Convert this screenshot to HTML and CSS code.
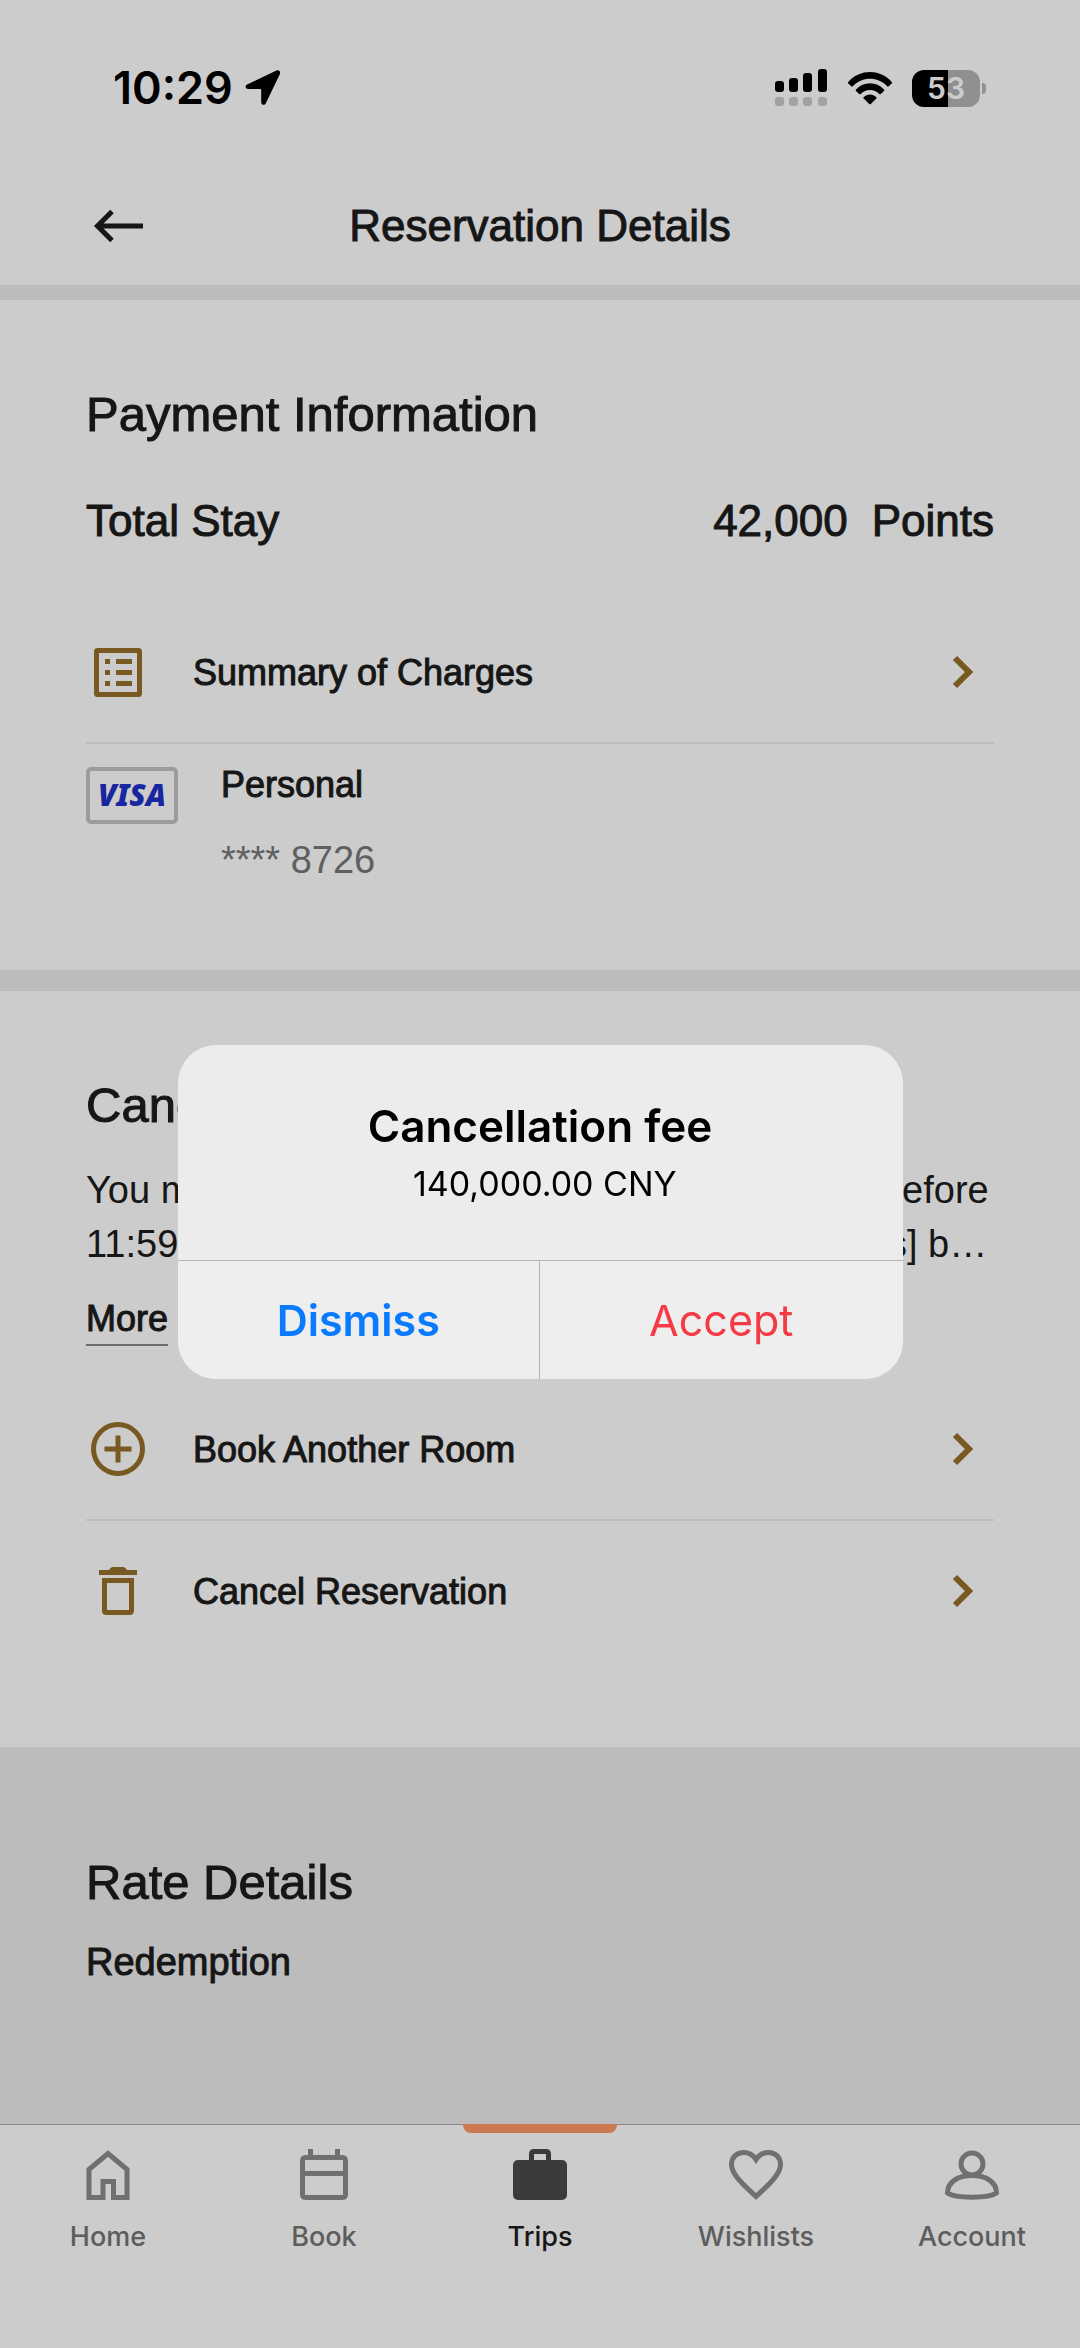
FILE: index.html
```html
<!DOCTYPE html>
<html lang="en">
<head>
  <meta charset="UTF-8" />
  <meta name="viewport" content="width=device-width, initial-scale=1.0"/>
  <title>Reservation Details</title>
  <link rel="stylesheet" href="styles.css">
</head>
<body>
  <div class="status-bar">
    <div class="status-left">
      <span class="time">10:29</span>
      <svg width="36" height="36" viewBox="0 0 36 36" fill="#000" aria-hidden="true">
        <path d="M31.500 .6 C33.800 -.4 36 1.700 34.800 4.200 L20.800 33.300 C19.600 35.800 16.200 35.200 16.200 32.300 V20.200 C16.200 19.500 15.800 19.100 15.100 19.100 H3.200 C.2 19.100 -.4 15.700 2.100 14.500 Z"/>
      </svg>
    </div>
    <div class="status-right">
      <svg width="54" height="38" viewBox="0 0 54 38" aria-hidden="true">
        <g fill="#000">
          <rect x="1" y="12" width="9" height="11" rx="3"/>
          <rect x="15" y="9" width="9" height="14" rx="3"/>
          <rect x="29" y="4" width="9" height="19" rx="3"/>
          <rect x="44" y="0" width="9" height="23" rx="3"/>
        </g>
        <g fill="#cbcbcb">
          <rect x="1" y="28" width="9" height="9" rx="3"/>
          <rect x="15" y="28" width="9" height="9" rx="3"/>
          <rect x="29" y="28" width="9" height="9" rx="3"/>
          <rect x="44" y="28" width="9" height="9" rx="3"/>
        </g>
      </svg>
      <svg width="46" height="34" viewBox="0 0 46 34" fill="#000" aria-hidden="true">
        <path d="M1.300 10.900 C13 -2.200 33 -2.200 44.700 10.900 C45.200 11.500 45.200 12 44.700 12.500 L41.700 15.300 C41.200 15.800 40.700 15.800 40.200 15.300 C31 5.300 15 5.300 5.800 15.300 C5.300 15.800 4.800 15.800 4.300 15.300 L1.300 12.500 C.8 12 .8 11.500 1.300 10.900 Z"/>
        <path d="M9 18.500 C16.500 10.200 29.500 10.200 37 18.500 C37.500 19.100 37.500 19.600 37 20.100 L33.800 23 C33.300 23.500 32.800 23.400 32.300 22.900 C27.300 17.700 18.700 17.700 13.700 22.900 C13.200 23.400 12.700 23.500 12.200 23 L9 20.100 C8.500 19.600 8.500 19.100 9 18.500 Z"/>
        <path d="M16.800 26 C20.200 22.600 25.800 22.600 29.200 26 C29.800 26.600 29.800 27.100 29.300 27.600 L23.800 32.900 C23.200 33.400 22.800 33.400 22.200 32.900 L16.700 27.600 C16.200 27.100 16.200 26.600 16.800 26 Z"/>
      </svg>
      <span class="battery">53</span>
    </div>
  </div>

  <header class="top-bar">
    <button type="button" class="back-btn" aria-label="Back">
      <svg width="64" height="36" viewBox="0 0 64 36" fill="none" stroke="#1c1c1c" stroke-width="5" aria-hidden="true">
        <path d="M57 18 H12 M26 3.500 L11.500 18 L26 32.500"/>
      </svg>
    </button>
    <h1>Reservation Details</h1>
  </header>

  <main>
    <section class="section payment">
      <h2>Payment Information</h2>
      <div class="total">
        <span>Total Stay</span>
        <span class="points"><span>42,000</span><span>Points</span></span>
      </div>
      <a href="#charges" class="row">
        <svg class="row-icon" viewBox="0 0 64 64" aria-hidden="true">
          <rect x="10.500" y="10.500" width="43" height="44" rx="1" fill="none" stroke="currentColor" stroke-width="5"/>
          <path fill="currentColor" d="M19 19h5v5h-5zM30 19h16v5h-16zM19 30h5v5h-5zM30 30h16v5h-16zM19 41h5v5h-5zM30 41h16v5h-16z"/>
        </svg>
        <span class="row-label">Summary of Charges</span>
        <svg class="chevron" viewBox="0 0 32 40" aria-hidden="true"><path d="M9 6 L23 20 L9 34"/></svg>
      </a>
      <div class="card">
        <span class="visa">VISA</span>
        <div class="card-info">
          <span class="card-name">Personal</span>
          <span class="card-number">**** 8726</span>
        </div>
      </div>
    </section>

    <section class="section cancellation">
      <h2>Cancellation Policy</h2>
      <p class="policy">You may cancel your reservation for no charge before 11:59 PM local hotel time on Jan 9 2024 (2 day[s] b…</p>
      <a href="#more" class="more">More</a>
      <a href="#book" class="row">
        <svg class="row-icon" viewBox="0 0 64 64" fill="none" stroke="currentColor" stroke-width="5" aria-hidden="true">
          <circle cx="32" cy="32" r="24.500"/>
          <path d="M32 18.500 V45.500 M18.500 32 H45.500"/>
        </svg>
        <span class="row-label">Book Another Room</span>
        <svg class="chevron" viewBox="0 0 32 40" aria-hidden="true"><path d="M9 6 L23 20 L9 34"/></svg>
      </a>
      <a href="#cancel" class="row">
        <svg class="row-icon" viewBox="0 0 64 64" aria-hidden="true">
          <path fill="currentColor" d="M13 11 H23 C24.500 8.500 26 8 28 8 H36 C38 8 39.500 8.500 41 11 H51 V16 H13 Z"/>
          <path fill="none" stroke="currentColor" stroke-width="5" d="M18.500 21.500 H45.500 V51.500 Q45.500 53.500 43.500 53.500 H20.500 Q18.500 53.500 18.500 51.500 Z"/>
        </svg>
        <span class="row-label">Cancel Reservation</span>
        <svg class="chevron" viewBox="0 0 32 40" aria-hidden="true"><path d="M9 6 L23 20 L9 34"/></svg>
      </a>
    </section>

    <section class="section rate">
      <h2>Rate Details</h2>
      <p class="rate-type">Redemption</p>
    </section>
  </main>

  <nav class="tab-bar">
    <a href="#home" class="tab">
      <svg viewBox="0 0 56 56" fill="none" stroke="currentColor" stroke-width="5" aria-hidden="true">
        <path d="M9 50.500 V22.500 L28 6.500 L47 22.500 V50.500 H33.500 V34.500 H23 V50.500 Z"/>
      </svg>
      <span>Home</span>
    </a>
    <a href="#book-tab" class="tab">
      <svg viewBox="0 0 56 56" fill="none" stroke="currentColor" stroke-width="5" aria-hidden="true">
        <rect x="6.500" y="10.500" width="43" height="40" rx="3"/>
        <path d="M6 26.500 H50 M14.500 2 V10 M41.500 2 V10"/>
      </svg>
      <span>Book</span>
    </a>
    <a href="#trips" class="tab active">
      <svg viewBox="0 0 56 56" aria-hidden="true">
        <rect x="1" y="13" width="54" height="40" rx="5" fill="currentColor"/>
        <path d="M19.500 14 V7 Q19.500 4.500 22 4.500 H34 Q36.500 4.500 36.500 7 V14" fill="none" stroke="currentColor" stroke-width="5"/>
      </svg>
      <span>Trips</span>
    </a>
    <a href="#wishlists" class="tab">
      <svg viewBox="0 0 56 56" fill="none" stroke="currentColor" stroke-width="5" aria-hidden="true">
        <path d="M28 49.500 C17 39 3.500 28 3.500 17.500 C3.500 10 9 5.500 15.500 5.500 C21 5.500 25.500 8.500 28 12.500 C30.500 8.500 35 5.500 40.500 5.500 C47 5.500 52.500 10 52.500 17.500 C52.500 28 39 39 28 49.500 Z"/>
      </svg>
      <span>Wishlists</span>
    </a>
    <a href="#account" class="tab">
      <svg viewBox="0 0 56 56" fill="none" stroke="currentColor" stroke-width="5" aria-hidden="true">
        <circle cx="28" cy="17" r="11"/>
        <path d="M3.500 46 C3.500 35 14 28.500 28 28.500 C42 28.500 52.500 35 52.500 46 C45 51.500 11 51.500 3.500 46 Z" stroke-linejoin="round"/>
      </svg>
      <span>Account</span>
    </a>
  </nav>

  <!-- cancellation fee alert -->
  <div class="overlay">
    <div class="alert" role="alertdialog" aria-labelledby="alert-title" aria-describedby="alert-text">
      <div class="alert-body">
        <h2 id="alert-title">Cancellation fee</h2>
        <p id="alert-text">&nbsp;140,000.00 CNY</p>
      </div>
      <div class="alert-actions">
        <button type="button" class="dismiss-btn">Dismiss</button>
        <button type="button" class="accept-btn">Accept</button>
      </div>
    </div>
  </div>
</body>
</html>
```

FILE: styles.css
```css
* {
  box-sizing: border-box;
}

body {
  margin: 0;
  min-height: 100vh;
  display: flex;
  flex-direction: column;
  background-color: #fff;
  color: #1c1c1c;
  font-family: "Liberation Sans", Helvetica, Arial, sans-serif;
  font-size: 36px;
}

h1, h2, p {
  margin: 0;
  font-weight: 400;
}

a {
  color: inherit;
  text-decoration: none;
}

button {
  padding: 0;
  border: none;
  background: none;
  font: inherit;
  cursor: pointer;
}

svg {
  display: block;
  flex-shrink: 0;
}

/* medium weight */
h1,
.section h2,
.total,
.row-label,
.card-name,
.more,
.rate-type {
  -webkit-text-stroke: 1px currentColor;
}

/* status bar */
.status-bar {
  height: 168px;
  padding: 8px 100px 0 113px;
  display: flex;
  align-items: center;
  justify-content: space-between;
  font-family: Inter, sans-serif;
  font-weight: 600;
}

.status-left {
  display: flex;
  align-items: center;
  gap: 12px;
}

.time {
  color: #000;
  font-size: 45px;
  line-height: 48px;
}

.status-right {
  display: flex;
  align-items: center;
  gap: 19px;
}

.battery {
  position: relative;
  width: 68px;
  height: 37px;
  border-radius: 12px;
  background: linear-gradient(to right, #000 36px, #b4b4b4 36px);
  color: #fff;
  font-size: 30px;
  line-height: 37px;
  text-align: center;
}

.battery::after {
  content: "";
  position: absolute;
  left: 70px;
  top: 13px;
  width: 4px;
  height: 11px;
  border-radius: 0 4px 4px 0;
  background-color: #b4b4b4;
}

/* header */
.top-bar {
  height: 117px;
  padding: 0 86px 2px;
  display: grid;
  grid-template-columns: 64px 1fr 64px;
  align-items: center;
}

h1 {
  font-size: 44px;
  line-height: 60px;
  text-align: center;
}

/* sections */
main {
  flex: 1;
  display: flex;
  flex-direction: column;
}

.section {
  padding: 84px 86px 86px;
  border-top: 21px solid #ececec;
}

.section h2 {
  font-size: 49px;
  line-height: 60px;
}

.payment {
  border-top-width: 15px;
  padding-bottom: 92px;
}

.total {
  margin: 47px 0 51px;
  display: flex;
  justify-content: space-between;
  font-size: 44px;
  line-height: 60px;
}

.points {
  display: flex;
  gap: 24px;
}

.row {
  height: 140px;
  display: flex;
  align-items: center;
  gap: 43px;
  color: #96702b;
}

.payment .row,
.row:not(:last-child) {
  height: 142px;
  border-bottom: 2px solid #ececec;
}

.row-icon {
  width: 64px;
  height: 64px;
}

.row-label {
  flex: 1;
  padding-top: 2px;
  color: #1c1c1c;
}

.chevron {
  width: 32px;
  height: 40px;
  margin-right: 16px;
  fill: none;
  stroke: currentColor;
  stroke-width: 6px;
}

.card {
  padding-top: 23px;
  display: flex;
  align-items: flex-start;
  gap: 43px;
}

.visa {
  width: 92px;
  height: 57px;
  border: 4px solid #c4c4c4;
  border-radius: 5px;
  color: #1f30c8;
  font-family: "Noto Sans", sans-serif;
  font-size: 30px;
  font-style: italic;
  font-weight: 900;
  line-height: 47px;
  text-align: center;
}

.card-info {
  display: flex;
  flex-direction: column;
  gap: 39px;
  line-height: 36px;
}

.card-number {
  color: #777;
  font-size: 38px;
}

.policy {
  margin-top: 28px;
  font-size: 38px;
  line-height: 54px;
}

.more {
  display: block;
  width: fit-content;
  margin: 23px 0 33px;
  border-bottom: 2px solid #888;
  line-height: 50px;
}

.rate {
  flex: 1;
  background-color: #ececec;
}

.rate-type {
  margin-top: 28px;
  font-size: 38px;
  line-height: 44px;
}

/* bottom tabs */
.tab-bar {
  height: 224px;
  border-top: 1px solid #aaa;
  display: grid;
  grid-template-columns: repeat(5, 1fr);
  font-family: Inter, sans-serif;
  font-size: 27px;
  font-weight: 500;
  line-height: 32px;
}

.tab {
  position: relative;
  padding-top: 22px;
  display: flex;
  flex-direction: column;
  align-items: center;
  gap: 18px;
  color: #757575;
}

.tab svg {
  width: 56px;
  height: 56px;
  color: #8c8c8c;
}

.tab.active {
  color: #1c1c1c;
}

.tab.active svg {
  color: #4a4a4a;
}

.tab.active::before {
  content: "";
  position: absolute;
  top: -1px;
  width: 154px;
  height: 9px;
  border-radius: 0 0 8px 8px;
  background-color: #ff9664;
}

/* alert */
.overlay {
  position: fixed;
  inset: 0;
  padding-top: 76px;
  display: flex;
  align-items: center;
  justify-content: center;
  background-color: rgba(0, 0, 0, 0.2);
  font-family: Inter, sans-serif;
}

.alert {
  width: 725px;
  max-width: 90%;
  border-radius: 38px;
  overflow: hidden;
  background-color: #ececec;
  color: #000;
  text-align: center;
}

.alert-body {
  padding: 54px 40px;
}

.alert h2 {
  font-size: 44px;
  font-weight: 600;
  line-height: 54px;
}

.alert p {
  margin-top: 9px;
  font-size: 34px;
  line-height: 44px;
}

.alert-actions {
  height: 119px;
  border-top: 1px solid #b4b4b4;
  display: grid;
  grid-template-columns: 1fr 1fr;
  background-color: #eee;
  font-size: 43px;
}

.dismiss-btn {
  border-right: 1px solid #b4b4b4;
  color: #0a7aff;
  font-weight: 600;
}

.accept-btn {
  color: #f43b45;
}
```
